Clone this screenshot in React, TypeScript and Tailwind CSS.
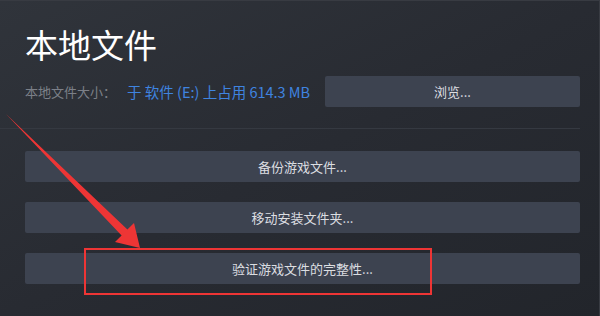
const font = { fontFamily: '"Noto Sans CJK SC", "Noto Sans", sans-serif' }

function ActionButton({ label }: { label: string }) {
  return (
    <button className="flex h-[31px] w-full items-center justify-center rounded-[2px] bg-[#3d4350] text-[13px] text-[#dcdee1]">
      {label}
    </button>
  )
}

export default function App() {
  return (
    <div
      className="relative h-[316px] w-[600px] overflow-hidden border-t border-r border-[#383b42] bg-linear-to-br from-[#30343b] via-[#282b32] to-[#22252b]"
      style={font}
    >
      <div className="pl-[25px] pr-[19px] pt-[27px]">
        <h1 className="text-[33px] leading-none font-normal text-white">本地文件</h1>

        <div className="mt-[15px] flex h-[31px] items-center">
          <span className="text-[13px] text-[#7c8088]">本地文件大小：</span>
          <span className="ml-[11px] text-[14.5px] text-[#3f84e0]">于 软件 (E:) 上占用 614.3 MB</span>
          <button className="ml-auto flex h-[31px] w-[255px] items-center justify-center rounded-[2px] bg-[#3d4350] text-[13px] text-[#dcdee1]">
            浏览...
          </button>
        </div>

        <div className="-ml-[25px] mt-[21px] h-px bg-[#353941]" />

        <div className="mt-[22px] flex flex-col gap-[20px]">
          <ActionButton label="备份游戏文件..." />
          <ActionButton label="移动安装文件夹..." />
          <ActionButton label="验证游戏文件的完整性..." />
        </div>
      </div>

      {/* red annotation: box + arrow */}
      <div className="absolute left-[84px] top-[247px] h-[47px] w-[348px] border-2 border-[#ee3535]" />
      <svg className="absolute left-0 top-0" width="600" height="316" viewBox="0 0 600 316">
        <polygon
          points="6,113 121.6,234.4 115,241 140,247 134,222 127.4,228.6"
          fill="#ee3535"
        />
      </svg>
    </div>
  )
}
